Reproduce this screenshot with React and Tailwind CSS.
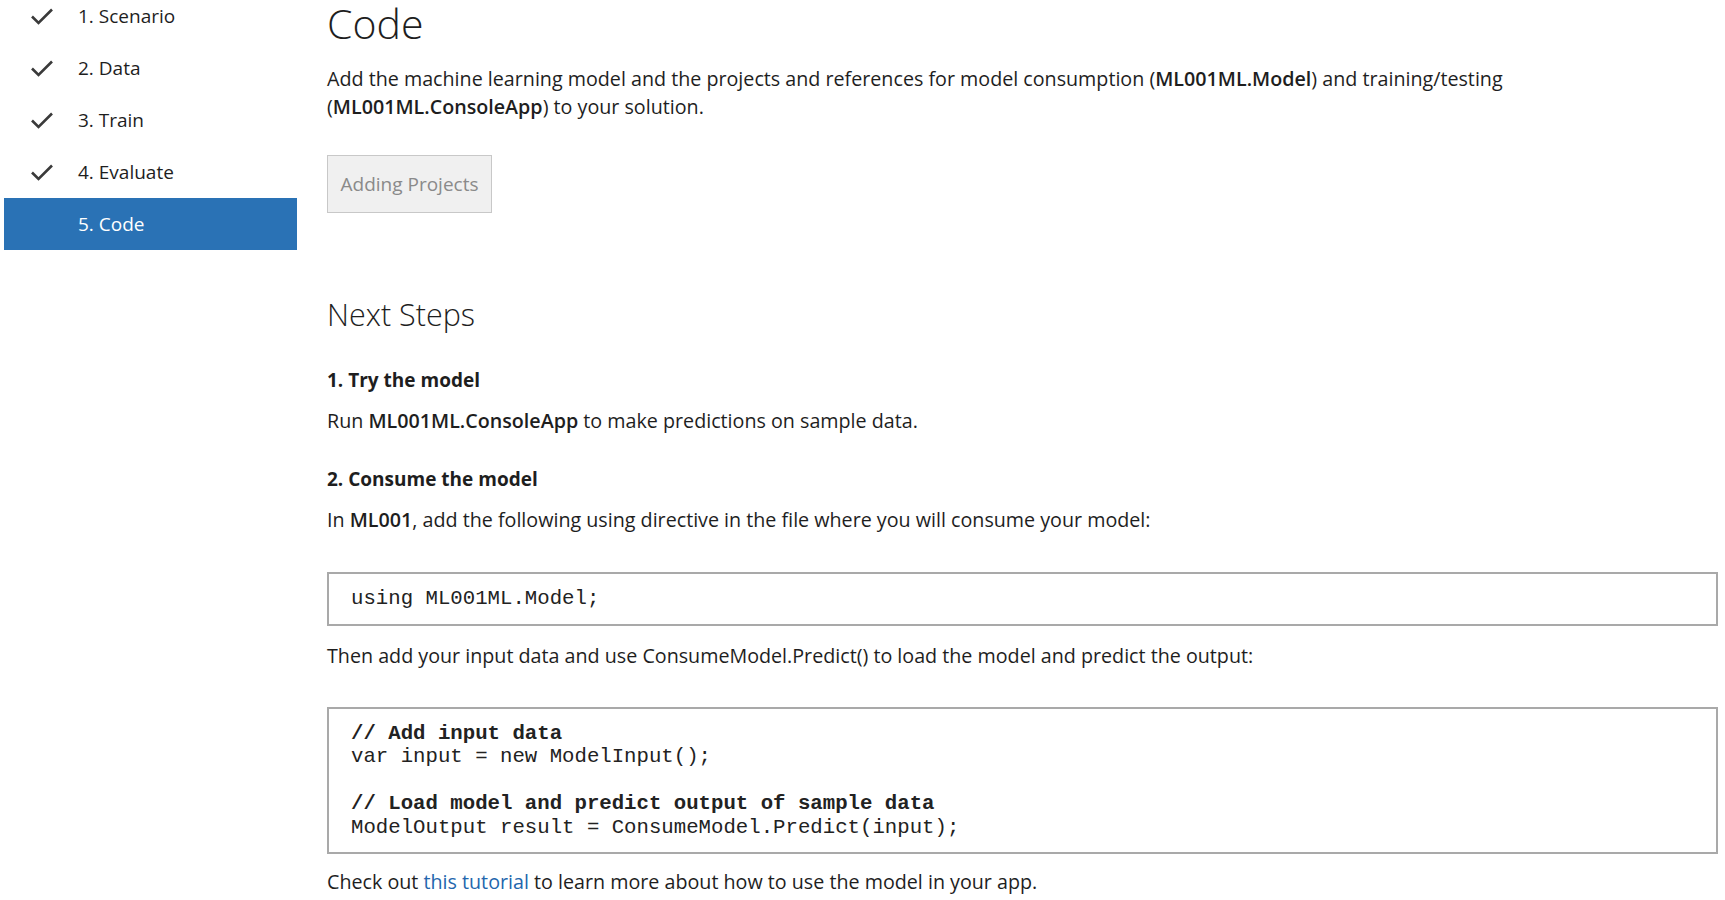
import React from "react";

const steps = [
  { label: "1. Scenario", done: true },
  { label: "2. Data", done: true },
  { label: "3. Train", done: true },
  { label: "4. Evaluate", done: true },
  { label: "5. Code", active: true },
];

const CheckMark = () => (
  <svg width="24" height="18" viewBox="0 0 24 18" fill="none">
    <path d="M2 9.5 L8.5 16 L22 2.5" stroke="#3a3a3a" strokeWidth="2.6" />
  </svg>
);

const Sidebar = () => (
  <div className="w-[297px] shrink-0 pl-[4px] -mt-[10px]">
    {steps.map((s) => (
      <div
        key={s.label}
        className={
          s.active
            ? "flex items-center h-[52px] bg-[#2a72b5] text-white"
            : "flex items-center h-[52px] text-[#1e1e1e]"
        }
      >
        <div className="w-[74px] flex justify-center pl-[2px]">
          {s.done && <CheckMark />}
        </div>
        <span className="text-[19px]">{s.label}</span>
      </div>
    ))}
  </div>
);

const CodeBox = ({ children }) => (
  <div className="border-2 border-[#a9a9a9] px-[22px] py-[13px] font-['Liberation_Mono','Courier_New',monospace] text-[20.7px] leading-[23.5px] text-[#222] whitespace-pre">
    {children}
  </div>
);

export default function App() {
  return (
    <div className="min-h-screen bg-white flex font-['Open_Sans','Liberation_Sans',sans-serif] text-[#1e1e1e] overflow-hidden">
      <Sidebar />
      <main className="flex-1 pl-[30px] pr-[7px] text-[19.7px] leading-[28px]">
        {/* Code */}
        <h1 className="mt-[2px] text-[41px] font-light leading-[42px]">Code</h1>
        <p className="mt-[21px]">
          Add the machine learning model and the projects and references for
          model consumption (<b className="font-semibold">ML001ML.Model</b>) and training/testing
          <br />(<b className="font-semibold">ML001ML.ConsoleApp</b>) to your solution.
        </p>
        <button className="mt-[34px] h-[58px] w-[165px] border border-[#c8c8c8] bg-[#f0f0f0] text-[19px] text-[#8a8a8a]">
          Adding Projects
        </button>

        {/* Next steps */}
        <h2 className="mt-[83px] text-[30.5px] font-light leading-[36px]">
          Next Steps
        </h2>
        <h3 className="mt-[34px] text-[19px] font-bold">1. Try the model</h3>
        <p className="mt-[13px]">
          Run <b className="font-semibold">ML001ML.ConsoleApp</b> to make predictions on sample data.
        </p>
        <h3 className="mt-[30px] text-[19px] font-bold">2. Consume the model</h3>
        <p className="mt-[13px]">
          In <b className="font-semibold">ML001</b>, add the following using directive in the file where
          you will consume your model:
        </p>
        <div className="mt-[38px]">
          <CodeBox>using ML001ML.Model;</CodeBox>
        </div>
        <p className="mt-[16px]">
          Then add your input data and use ConsumeModel.Predict() to load the
          model and predict the output:
        </p>
        <div className="mt-[37px]">
          <CodeBox>
            <b>// Add input data</b>
            {"\nvar input = new ModelInput();\n\n"}
            <b>// Load model and predict output of sample data</b>
            {"\nModelOutput result = ConsumeModel.Predict(input);"}
          </CodeBox>
        </div>
        <p className="mt-[14px]">
          Check out <span className="text-[#2366ad]">this tutorial</span> to
          learn more about how to use the model in your app.
        </p>
      </main>
    </div>
  );
}
